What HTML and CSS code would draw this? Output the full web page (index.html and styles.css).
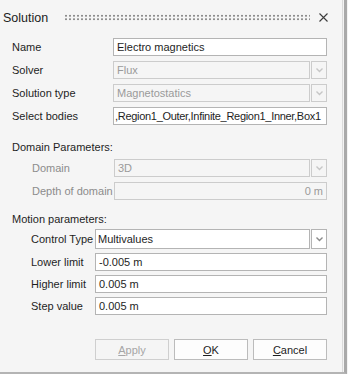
FILE: index.html
```html
<!DOCTYPE html>
<html lang="en">
<head>
    <meta charset="UTF-8">
    <title>Solution</title>
    <link rel="stylesheet" href="styles.css">
</head>
<body>

    <div class="frame">
        <div class="window">

            <!-- Title bar -->
            <div class="titlebar">
                <span class="title">Solution</span>
                <span class="grip"></span>
                <svg class="close" width="9" height="9" viewBox="0 0 9 9">
                    <path d="M0.5 0.5 L8.5 8.5 M8.5 0.5 L0.5 8.5" stroke="#3c3c3c" stroke-width="1.1" fill="none"/>
                </svg>
            </div>

            <div class="form">

                <div class="row">
                    <label class="lbl">Name</label>
                    <div class="box">Electro magnetics</div>
                </div>
                <div class="row">
                    <label class="lbl">Solver</label>
                    <div class="combo disabled">
                        <div class="box">Flux</div>
                        <div class="arrow"><svg width="7" height="5" viewBox="0 0 7 5"><path d="M0.5 0.5 L3.5 3.5 L6.5 0.5" stroke="#c6c6c6" stroke-width="1.4" fill="none"/></svg></div>
                    </div>
                </div>
                <div class="row">
                    <label class="lbl">Solution type</label>
                    <div class="combo disabled">
                        <div class="box">Magnetostatics</div>
                        <div class="arrow"><svg width="7" height="5" viewBox="0 0 7 5"><path d="M0.5 0.5 L3.5 3.5 L6.5 0.5" stroke="#c6c6c6" stroke-width="1.4" fill="none"/></svg></div>
                    </div>
                </div>
                <div class="row">
                    <label class="lbl">Select bodies</label>
                    <div class="box clip">,Region1_Outer,Infinite_Region1_Inner,Box1</div>
                </div>

                <!-- Domain -->
                <div class="section">Domain Parameters:</div>
                <div class="row sub">
                    <label class="lbl off">Domain</label>
                    <div class="combo disabled">
                        <div class="box">3D</div>
                        <div class="arrow"><svg width="7" height="5" viewBox="0 0 7 5"><path d="M0.5 0.5 L3.5 3.5 L6.5 0.5" stroke="#c6c6c6" stroke-width="1.4" fill="none"/></svg></div>
                    </div>
                </div>
                <div class="row sub">
                    <label class="lbl off">Depth of domain</label>
                    <div class="box off-box right">0 m</div>
                </div>

                <!-- Motion -->
                <div class="section second">Motion parameters:</div>
                <div class="motion">
                    <div class="row mrow">
                        <label class="lbl">Control Type</label>
                        <div class="combo tall">
                            <div class="box">Multivalues</div>
                            <div class="arrow"><svg width="7" height="5" viewBox="0 0 7 5"><path d="M0.5 0.5 L3.5 3.5 L6.5 0.5" stroke="#8a8a8a" stroke-width="1.4" fill="none"/></svg></div>
                        </div>
                    </div>
                    <div class="row mrow">
                        <label class="lbl">Lower limit</label>
                        <div class="box">-0.005 m</div>
                    </div>
                    <div class="row mrow">
                        <label class="lbl">Higher limit</label>
                        <div class="box">0.005 m</div>
                    </div>
                    <div class="row mrow">
                        <label class="lbl">Step value</label>
                        <div class="box">0.005 m</div>
                    </div>
                </div>

                <div class="buttons">
                    <button class="btn" disabled><u>A</u>pply</button>
                    <button class="btn"><u>O</u>K</button>
                    <button class="btn"><u>C</u>ancel</button>
                </div>

            </div>
        </div>
    </div>

</body>
</html>
```

FILE: styles.css
```css
body {
    margin: 0;
    padding: 0;
    background-color: #f3f3f3;
    font-family: "Liberation Sans", Arial, sans-serif;
    font-size: 11px;
    color: #1e1e1e;
}
.frame {
    width: 344px;
    height: 372px;
    border-right: 3px solid #a9a9a9;
    border-bottom: 2px solid #b4b4b4;
}
.window {
    width: 343px;
    height: 372px;
    background-color: #f5f5f5;
    border-right: 1px solid #dadada;
    box-sizing: border-box;
}
.titlebar {
    display: flex;
    align-items: center;
    height: 35px;
    padding: 0 14px 0 3px;
}
.title {
    font-size: 12.5px;
    color: #222;
}
.grip {
    flex: 1;
    height: 7px;
    margin: 0 9px 0 16px;
    background-image: radial-gradient(circle, #8e8e8e 0.7px, transparent 0.9px);
    background-size: 4px 3.5px;
    background-position: 0 0;
}
.close {
    display: block;
}
.form {
    padding: 3px 15px 0 12px;
}
.row {
    display: flex;
    align-items: center;
    height: 18px;
    margin-bottom: 5px;
}
.lbl {
    width: 101px;
    flex: none;
}
.sub {
    padding-left: 20px;
}
.sub .lbl {
    width: 82px;
}
.off {
    color: #8c8c8c;
}
.box {
    flex: 1;
    height: 18px;
    box-sizing: border-box;
    background-color: #fff;
    border: 1px solid #b4b4b4;
    padding: 0 3px;
    line-height: 16px;
    white-space: nowrap;
    overflow: hidden;
}
.clip {
    padding-left: 1px;
    letter-spacing: -0.3px;
}
.right {
    text-align: right;
}
.off-box {
    background-color: #f5f5f5;
    border-color: #cccccc;
    color: #9a9a9a;
}
.combo {
    flex: 1;
    display: flex;
    height: 18px;
}
.combo .arrow {
    width: 16px;
    flex: none;
    box-sizing: border-box;
    border: 1px solid #b4b4b4;
    margin-left: 1px;
    display: flex;
    align-items: center;
    justify-content: center;
    background-color: #f7f7f7;
}
.disabled .box,
.disabled .arrow {
    background-color: #f5f5f5;
    border-color: #cccccc;
    color: #9a9a9a;
}
.tall {
    height: 20px;
}
.tall .box {
    height: 20px;
    line-height: 18px;
    padding-left: 2px;
}
.tall .arrow {
    background-color: #fff;
}
.section {
    height: 14px;
    line-height: 14px;
    margin: 15px 0 5px 0;
}
.section.second {
    margin: 12px 0 3px 0;
}
.motion {
    padding-left: 19px;
}
.mrow {
    margin-bottom: 4px;
}
.mrow .lbl {
    width: 64px;
}
.mrow.row:first-child {
    height: 20px;
}
.buttons {
    display: flex;
    justify-content: flex-end;
    gap: 5px;
    margin-top: 24px;
}
.btn {
    width: 74px;
    height: 21px;
    font-family: inherit;
    font-size: 11px;
    color: #1e1e1e;
    background-color: #fdfdfd;
    border: 1px solid #bcbcbc;
    padding: 0;
}
.btn:disabled {
    color: #a6a6a6;
    background-color: #f5f5f5;
    border-color: #cfcfcf;
}
```
